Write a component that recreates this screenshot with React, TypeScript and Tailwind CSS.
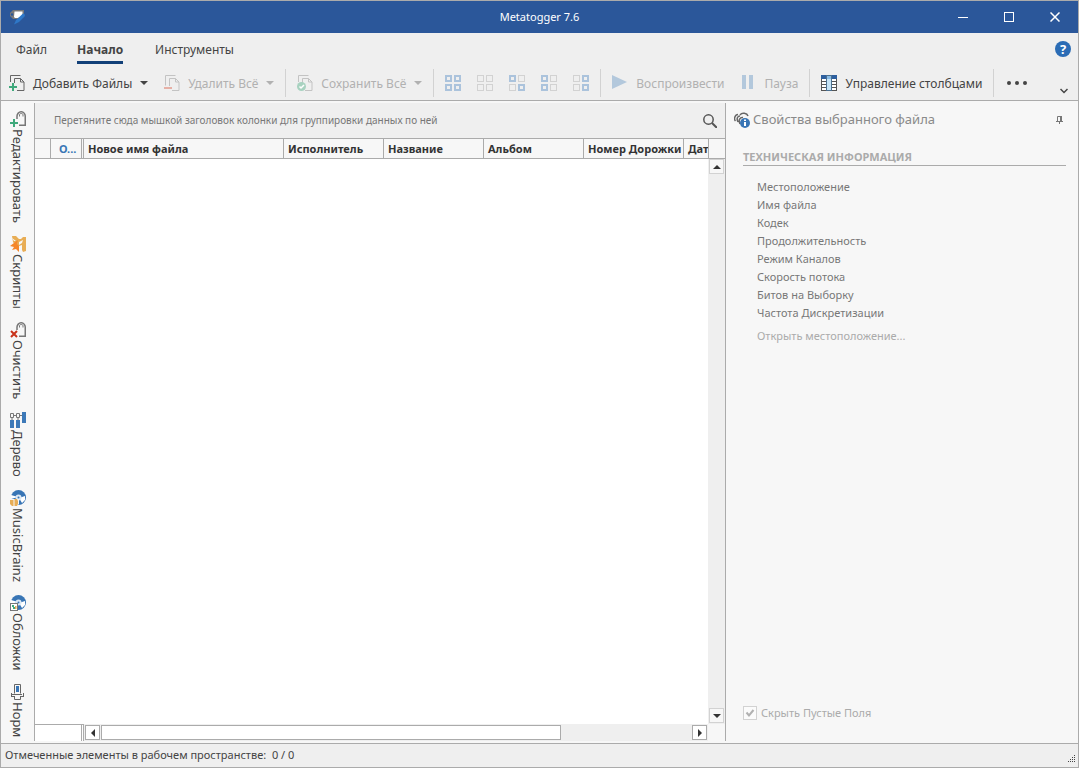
import type { ReactNode } from 'react'

type Quad = [boolean, boolean, boolean, boolean]

const IconLogo = () => (
  <svg viewBox="0 0 16 16" className="w-4 h-4">
    <path d="M4 1h11v7L9 10H4L1 7V4Z" fill="#7a7a7a" />
    <path d="M5.500 2.500h8V7L9 9H6L5 8Z" fill="#fff" />
    <circle cx="3" cy="5.500" r="1.200" fill="#2b579a" />
    <path d="M15.500 5 14 4.500 7 11l-2 4.500L10 13l6-6Z" fill="#2f78c8" />
  </svg>
)

const Pages = ({ children, stroke }: { children: ReactNode; stroke: string }) => (
  <svg viewBox="0 0 16 16" fill="none" className="w-4 h-4 shrink-0">
    <path d="M1.500 7V.500h10M5.500 8V3.500h6l3.500 3.500v8.500H8" stroke={stroke} />
    <path d="M11.500 3.500v3.500H15" stroke={stroke} />
    {children}
  </svg>
)

const IconAdd = () => (
  <Pages stroke="#666">
    <path d="M4 8v8M0 12h8" stroke="#3fa97c" strokeWidth={2} />
  </Pages>
)

const IconRemove = () => (
  <Pages stroke="#c3c3c3">
    <path d="M1.500 7v3.500M5.500 8v3" stroke="#c3c3c3" />
    <path d="M0 13h8" stroke="#e6b0a6" strokeWidth={2} />
  </Pages>
)

const IconSave = () => (
  <Pages stroke="#c3c3c3">
    <circle cx="4.500" cy="11.500" r="4.500" fill="#a8d2c0" />
    <path d="M2.500 11.500 4 13l3-3" stroke="#fff" strokeWidth={1.500} />
  </Pages>
)

const IconQuad = ({ on }: { on: Quad }) => (
  <svg viewBox="0 0 16 16" fill="none" className="w-4 h-4">
    {on.map((active, i) => {
      const x = (i % 2) * 9
      const y = Math.floor(i / 2) * 9
      return active ? (
        <rect key={i} x={x + 1} y={y + 1} width="5" height="5" stroke="#abc3dc" strokeWidth={2} />
      ) : (
        <rect key={i} x={x + 0.5} y={y + 0.5} width="6" height="6" stroke="#d2d2d2" />
      )
    })}
  </svg>
)

const IconPlay = () => (
  <svg viewBox="0 0 16 16" className="w-4 h-4">
    <path d="M0 0v14l15-7Z" fill="#b3c8dc" />
  </svg>
)

const IconPause = () => (
  <svg viewBox="0 0 16 16" className="w-4 h-4">
    <path d="M2 0h4v14H2ZM9 0h4v14H9Z" fill="#b3c8dc" />
  </svg>
)

const IconColumns = () => (
  <svg viewBox="0 0 16 16" className="w-4 h-4">
    <rect width="16" height="16" fill="#555" />
    <path d="M1 4h4v2H1ZM1 7h4v2H1ZM1 10h4v2H1ZM1 13h4v2H1ZM11 4h4v2h-4ZM11 7h4v2h-4ZM11 10h4v2h-4ZM11 13h4v2h-4Z" fill="#fff" />
    <rect width="16" height="4" fill="#2d5f9e" />
    <rect x="5" width="6" height="16" fill="#4a6f8f" />
    <rect x="6" y="1" width="4" height="14" fill="#c5e4f7" />
    <rect x="6" y="1" width="4" height="3" fill="#88bbe6" />
  </svg>
)

const IconTag = ({ remove }: { remove?: boolean }) => (
  <svg viewBox="0 0 16 16" fill="none" className="w-4 h-4 shrink-0">
    <path d="M7 8V5c0-2 2-4.250 4-4.250h.500C13.500.750 15.250 3 15.250 5v9.250H9" stroke="#777" strokeWidth={1.500} />
    <path d="M9.500 5.500V4c0-1 .500-1.500 1.750-1.500S13 3 13 4v1.500" stroke="#777" />
    {remove ? (
      <path d="m1 9 6 6M7 9l-6 6" stroke="#c8321a" strokeWidth={2} />
    ) : (
      <path d="M4 8v8M0 12h8" stroke="#3fa97c" strokeWidth={2} />
    )}
  </svg>
)

const IconScript = () => (
  <svg viewBox="0 0 16 16" className="w-4 h-4 shrink-0">
    <path d="M2 0h4l3 3h2l2-2h3v14l-3 1-1-2V9l-3 1-2 2-4-6Z" fill="#e8ad55" />
    <path d="m9 6 4-2-1 3-3 2ZM2 2l4 3H4Z" fill="#f7f7f7" />
    <path d="m8 4-8 6 4 1-2 3 4-1 3 3V10L7 8Z" fill="#f5862a" />
  </svg>
)

const IconTree = () => (
  <svg viewBox="0 0 16 16" fill="none" className="w-4 h-4 shrink-0">
    <path d="M4 3.500h8M2 5v3M8 5v3" stroke="#777" />
    <path d="M.500 1.500h3v4h-3ZM6.500 1.500h3v4h-3Z" fill="#f7f7f7" stroke="#777" />
    <path d="M12 0h4v11h-4ZM0 8h4v8H0ZM6 8h4v8H6Z" fill="#3d79b8" />
  </svg>
)

const Disc = ({ children }: { children: ReactNode }) => (
  <svg viewBox="0 0 16 16" fill="none" className="w-4 h-4 shrink-0">
    <circle cx="8.500" cy="7.500" r="7.500" fill="#3875b5" />
    <path d="M8 7 1 5v4ZM9 8l6-2v4l-3 3Z" fill="#fff" />
    <circle cx="8.500" cy="7.500" r="3" fill="#dbe8f5" />
    <circle cx="8.500" cy="7.500" r="1" fill="#3875b5" />
    {children}
  </svg>
)

const IconBrainz = () => (
  <Disc>
    <path d="M0 9h9v5l-2 2H2l-2-2Z" fill="#f7f7f7" />
    <path d="M0 10h3.500v6H2l-2-2ZM4.500 9H7l1 2v3l-1 2H4.500Z" fill="#e8ad55" />
  </Disc>
)

const IconCover = () => (
  <Disc>
    <rect x=".500" y="8.500" width="7" height="7" fill="#fff" stroke="#777" />
    <path d="M2 10h2v2H2ZM3 12h2v2H3Z" fill="#3fa97c" />
    <path d="M5 11h1.500v3H5Z" fill="#e8ad55" />
  </Disc>
)

const IconNormalize = () => (
  <svg viewBox="0 0 16 16" fill="none" className="w-4 h-4 shrink-0">
    <path d="M4.500 9.500v-9h6v9M2 10.500h10M1.500 9v4M13.500 9v4M2 12.500h2M11 12.500h2M4.500 12v3.500h6V12" stroke="#666" />
    <path d="M6 2h3v6H6Z" fill="#3875b5" />
  </svg>
)

const IconInfo = () => (
  <svg viewBox="0 0 16 16" fill="none" className="w-4 h-4 shrink-0">
    <path d="M1.500 9C-.500 7 1 2.500 4 2.500M4 10C2 6 4 4 6 4M6 3c2-3 7-2 8 1M6 12C4 8 6 5 9 5.500" stroke="#666" strokeWidth={1.500} />
    <circle cx="11" cy="11" r="5" fill="#3875b5" />
    <path d="M11 7.500v1.500M11 10v4" stroke="#fff" strokeWidth={2} />
  </svg>
)

const IconPin = () => (
  <svg viewBox="0 0 8 8" fill="none" className="w-2 h-2">
    <path d="M1.500 5V.500h4V5M0 5.500h7M3.500 6v2" stroke="#777" />
    <path d="M4 0h2v5H4Z" fill="#777" />
  </svg>
)

const Arrow = ({ d }: { d: string }) => (
  <svg viewBox="0 0 8 8" className="w-2 h-2 shrink-0">
    <path d={d} fill="currentColor" />
  </svg>
)

const DOWN = 'M0 2h8L4 6Z'
const UP = 'M0 6h8L4 2Z'
const LEFT = 'M6 0v8L2 4Z'
const RIGHT = 'M2 0v8l4-4Z'

const Separator = () => <div className="w-px h-7 bg-[#d2d2d2] shrink-0" />

interface ToolProps {
  icon: ReactNode
  label: string
  menu?: boolean
  disabled?: boolean
}

const Tool = ({ icon, label, menu, disabled }: ToolProps) => (
  <button
    disabled={disabled}
    className="flex items-center gap-2 h-7 shrink-0 whitespace-nowrap text-xs text-[#444] disabled:text-[#b1b1b1]"
  >
    {icon}
    <span className="pt-0.5">{label}</span>
    {menu && <Arrow d={DOWN} />}
  </button>
)

const selections: { title: string; on: Quad }[] = [
  { title: 'all', on: [true, true, true, true] },
  { title: 'none', on: [false, false, false, false] },
  { title: 'invert', on: [true, false, false, true] },
  { title: 'left', on: [true, false, true, false] },
  { title: 'right', on: [false, true, false, true] },
]

const panels = [
  { label: 'Редактировать', icon: <IconTag /> },
  { label: 'Скрипты', icon: <IconScript /> },
  { label: 'Очистить', icon: <IconTag remove /> },
  { label: 'Дерево', icon: <IconTree /> },
  { label: 'MusicBrainz', icon: <IconBrainz /> },
  { label: 'Обложки', icon: <IconCover /> },
  { label: 'Норм', icon: <IconNormalize /> },
]

const columns = ['Новое имя файла', 'Исполнитель', 'Название', 'Альбом', 'Номер Дорожки', 'Дат']

const properties = [
  'Местоположение',
  'Имя файла',
  'Кодек',
  'Продолжительность',
  'Режим Каналов',
  'Скорость потока',
  'Битов на Выборку',
  'Частота Дискретизации',
]

function TitleBar() {
  return (
    <header className="grid grid-cols-[1fr_auto_1fr] items-center h-8 bg-[#2b579a] text-white shrink-0">
      <div className="pl-2">
        <IconLogo />
      </div>
      <h1 className="text-[11px]">Metatogger 7.6</h1>
      <div className="flex justify-end">
        <button aria-label="Свернуть" className="flex w-[46px] h-8 items-center justify-center">
          <svg viewBox="0 0 10 10" className="w-2.5 h-2.5" stroke="currentColor"><path d="M0 5.500h10" /></svg>
        </button>
        <button aria-label="Развернуть" className="flex w-[46px] h-8 items-center justify-center">
          <svg viewBox="0 0 10 10" className="w-2.5 h-2.5" stroke="currentColor" fill="none"><rect x=".500" y=".500" width="9" height="9" /></svg>
        </button>
        <button aria-label="Закрыть" className="flex w-[46px] h-8 items-center justify-center">
          <svg viewBox="0 0 10 10" className="w-2.5 h-2.5" stroke="currentColor" strokeWidth={1.5}><path d="m.500.500 9 9M9.500.500l-9 9" /></svg>
        </button>
      </div>
    </header>
  )
}

function Ribbon() {
  return (
    <div className="bg-[#efefef] border-b border-[#ababab] shrink-0">
      <nav className="flex items-center h-8 pl-[15px] pr-[7px] text-xs text-[#444]">
        <button className="h-8 pt-0.5">Файл</button>
        <button className="h-8 pt-0.5 ml-[30px] font-bold relative">
          Начало
          <span className="absolute inset-x-0 bottom-px h-[3px] bg-[#124078]" />
        </button>
        <button className="h-8 pt-0.5 ml-8">Инструменты</button>
        <button aria-label="Справка" className="ml-auto w-4 h-4 rounded-full bg-[#2b6cb5] text-white text-[13px] leading-4 font-bold">
          ?
        </button>
      </nav>
      <div className="flex items-center h-[35px] pl-2 pr-2.5 gap-[11px]">
        <div className="flex gap-4">
          <Tool icon={<IconAdd />} label="Добавить Файлы" menu />
          <Tool icon={<IconRemove />} label="Удалить Всё" menu disabled />
        </div>
        <Separator />
        <Tool icon={<IconSave />} label="Сохранить Всё" menu disabled />
        <Separator />
        <div className="flex gap-4">
          {selections.map((s) => (
            <button key={s.title} aria-label={s.title} disabled className="w-4 h-4">
              <IconQuad on={s.on} />
            </button>
          ))}
        </div>
        <Separator />
        <div className="flex gap-4">
          <Tool icon={<IconPlay />} label="Воспроизвести" disabled />
          <Tool icon={<IconPause />} label="Пауза" disabled />
        </div>
        <Separator />
        <Tool icon={<IconColumns />} label="Управление столбцами" />
        <Separator />
        <button aria-label="Ещё" className="h-7 text-[#444]">
          <svg viewBox="0 0 24 8" fill="currentColor" className="w-6 h-2">
            <circle cx="4" cy="4" r="2" /><circle cx="12" cy="4" r="2" /><circle cx="20" cy="4" r="2" />
          </svg>
        </button>
        <button aria-label="Свернуть ленту" className="ml-auto self-end pb-1.5 text-[#444]">
          <svg viewBox="0 0 8 6" fill="none" stroke="currentColor" strokeWidth={1.5} className="w-2 h-1.5">
            <path d="m.500 1 3.500 3.500L7.500 1" />
          </svg>
        </button>
      </div>
    </div>
  )
}

function SidePanels() {
  return (
    <aside className="flex flex-col gap-[13px] w-[34px] pt-2 border-r border-[#ababab] overflow-hidden shrink-0">
      {panels.map((p) => (
        <button key={p.label} className="flex flex-col items-center gap-0.5 shrink-0 text-[13px] leading-5 text-[#444]">
          {p.icon}
          <span className="[writing-mode:vertical-rl] whitespace-nowrap">{p.label}</span>
        </button>
      ))}
    </aside>
  )
}

function FileGrid() {
  return (
    <main className="flex flex-col flex-1 min-w-0 border-r border-[#ababab]">
      <div className="flex items-center justify-between h-[35px] pl-[19px] pr-2 bg-[#efefef] text-[10px] text-[#777] shrink-0">
        <span>Перетяните сюда мышкой заголовок колонки для группировки данных по ней</span>
        <button aria-label="Поиск" className="text-[#555]">
          <svg viewBox="0 0 14 14" fill="none" stroke="currentColor" className="w-3.5 h-3.5">
            <circle cx="5.500" cy="5.500" r="4.700" strokeWidth={1.500} /><path d="m9 9 5 5" strokeWidth={2} />
          </svg>
        </button>
      </div>
      <div className="flex flex-1 min-h-0">
        <div className="flex flex-col flex-1 min-w-0">
          <div className="flex-1 overflow-hidden bg-white">
            <div className="border-y border-[#ababab] bg-[#f7f7f7]">
              <table className="table-fixed border-separate border-spacing-0 w-full text-[11px] text-[#333]">
                <thead>
                  <tr className="h-[19px] text-left leading-[19px]">
                    <th className="w-4 p-0 border-r border-[#ababab]" />
                    <th className="w-[33px] p-0 pl-2 border-r-[3px] border-double border-[#ababab] text-[#3875b5]">О...</th>
                    {columns.map((c, i) => (
                      <th
                        key={c}
                        className={`p-0 pl-1 font-bold border-[#ababab] whitespace-nowrap ${
                          i === 0 ? 'w-[200px] border-r' : i < 5 ? 'w-[100px] border-r' : ''
                        }`}
                      >
                        {c}
                      </th>
                    ))}
                  </tr>
                </thead>
                <tbody />
              </table>
            </div>
          </div>
          <div className="flex h-[17px] bg-[#efefef] shrink-0">
            <div className="w-[49px] bg-white border-t border-t-[#ababab] border-r-[3px] border-r-[#ababab] [border-right-style:double]" />
            <div className="flex flex-1 items-center gap-px px-px text-[#333]">
              <button aria-label="Влево" className="flex items-center justify-center w-[15px] h-[15px] bg-white border border-[#ababab]">
                <Arrow d={LEFT} />
              </button>
              <div className="flex-1">
                <div className="w-[78%] h-[15px] bg-white border border-[#ababab]" />
              </div>
              <button aria-label="Вправо" className="flex items-center justify-center w-[15px] h-[15px] bg-white border border-[#ababab]">
                <Arrow d={RIGHT} />
              </button>
            </div>
          </div>
        </div>
        <div className="flex flex-col w-[17px] bg-[#f7f7f7] text-[#333] shrink-0">
          <div className="h-[21px] border-y border-l border-[#ababab]" />
          <div className="flex flex-col flex-1 items-center justify-between pb-px bg-[#efefef]">
            <button aria-label="Вверх" className="flex items-center justify-center w-[15px] h-[15px] bg-[#f7f7f7] border border-[#d2d2d2]">
              <Arrow d={UP} />
            </button>
            <button aria-label="Вниз" className="flex items-center justify-center w-[15px] h-[15px] bg-[#f7f7f7] border border-[#d2d2d2]">
              <Arrow d={DOWN} />
            </button>
          </div>
          <div className="h-[17px]" />
        </div>
      </div>
    </main>
  )
}

function Properties() {
  return (
    <section className="flex flex-col w-[352px] pl-[17px] pr-3 text-[11px] text-[#777] shrink-0">
      <div className="flex items-center h-[33px] -ml-[9px] gap-[3px] text-[13px] text-[#8a8a8a]">
        <IconInfo />
        <h2>Свойства выбранного файла</h2>
        <button aria-label="Закрепить" className="ml-auto p-0.5"><IconPin /></button>
      </div>
      <h3 className="mt-3 h-[18px] leading-[18px] font-bold text-[#ababab] border-b border-[#ababab]">ТЕХНИЧЕСКАЯ ИНФОРМАЦИЯ</h3>
      <ul className="mt-3 pl-3.5 leading-[18px]">
        {properties.map((p) => (
          <li key={p}>{p}</li>
        ))}
      </ul>
      <a href="#" className="mt-[5px] ml-3.5 leading-[18px] text-[#ababab]">Открыть местоположение...</a>
      <label className="flex items-center gap-1 mt-auto mb-5 text-[#ababab] relative">
        <input type="checkbox" checked disabled readOnly className="appearance-none w-3.5 h-3.5 bg-[#fbfbfb] border border-[#d2d2d2]" />
        <svg viewBox="0 0 14 14" fill="none" stroke="#b1b1b1" strokeWidth={2} className="absolute left-0 w-3.5 h-3.5">
          <path d="m3.500 6.500 2.500 3 4.500-5.500" />
        </svg>
        Скрыть Пустые Поля
      </label>
    </section>
  )
}

export default function App() {
  return (
    <div className="flex flex-col h-screen overflow-hidden border border-[#ababab] bg-[#f7f7f7] font-['Noto_Sans',sans-serif]">
      <TitleBar />
      <Ribbon />
      <div className="flex flex-1 min-h-0 py-0.5">
        <SidePanels />
        <FileGrid />
        <Properties />
      </div>
      <footer className="flex items-center justify-between h-6 pl-1 pr-0.5 bg-[#efefef] border-t border-[#ababab] text-[11px] text-[#444] shrink-0">
        <span>Отмеченные элементы в рабочем пространстве: &nbsp;0 / 0</span>
        <svg viewBox="0 0 8 8" fill="#444" className="w-2 h-2 self-end mb-1">
          <path d="M6 0h1v1H6ZM4 2h1v1H4ZM6 2h1v1H6ZM2 4h1v1H2ZM4 4h1v1H4ZM6 4h1v1H6ZM0 6h1v1H0ZM2 6h1v1H2ZM4 6h1v1H4ZM6 6h1v1H6Z" />
        </svg>
      </footer>
    </div>
  )
}
